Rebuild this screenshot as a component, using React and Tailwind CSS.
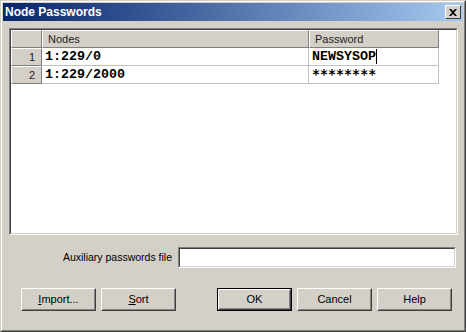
import React from 'react'

const sans = { fontFamily: '"Liberation Sans", Arial, sans-serif' }
const mono = { fontFamily: '"Liberation Mono", "Courier New", monospace' }
const starMono = { fontFamily: '"DejaVu Sans Mono", "Liberation Mono", monospace' }

function Button({ children, isDefault = false }) {
  const bevel = (
    <div className="h-full w-full border border-t-white border-l-white border-r-[#404040] border-b-[#404040]">
      <div className="h-full w-full border border-t-[#d4d0c8] border-l-[#d4d0c8] border-r-[#808080] border-b-[#808080] flex items-center justify-center text-[11px] text-black">
        {children}
      </div>
    </div>
  )
  return (
    <div className={`w-[75px] h-[23px] ${isDefault ? 'border border-black' : ''}`}>
      {bevel}
    </div>
  )
}

function HeaderCell({ children, className = '' }) {
  return (
    <div className={`h-[18px] bg-[#d4d0c8] border border-t-white border-l-white border-r-[#808080] border-b-[#808080] text-[11px] text-[#222] flex items-center ${className}`}>
      {children}
    </div>
  )
}

const rows = [
  { n: 1, node: '1:229/0', pass: 'NEWSYSOP', editing: true },
  { n: 2, node: '1:229/2000', pass: '********', masked: true },
]

export default function App() {
  return (
    <div className="w-[466px] h-[332px] border border-t-[#d4d0c8] border-l-[#d4d0c8] border-r-[#404040] border-b-[#404040] bg-[#d4d0c8]" style={sans}>
      <div className="h-full w-full border border-t-white border-l-white border-r-[#808080] border-b-[#808080] p-px flex flex-col">
        {/* Title bar */}
        <div className="h-[18px] bg-linear-to-r from-[#0a246a] to-[#a6caf0] flex items-center justify-between pl-[2px] pr-[2px]">
          <span className="text-white font-bold text-[12px]">Node Passwords</span>
          <div className="w-[16px] h-[14px] border border-t-white border-l-white border-r-[#404040] border-b-[#404040] bg-[#d4d0c8] flex items-center justify-center">
            <svg width="8" height="7" viewBox="0 0 8 7">
              <path d="M0 0h2l2 2 2-2h2L5 3.5 8 7H6L4 5 2 7H0l3-3.5z" fill="#000" />
            </svg>
          </div>
        </div>

        {/* Grid */}
        <div className="ml-[6px] mt-[7px] w-[449px] h-[207px] border border-t-[#808080] border-l-[#808080] border-r-white border-b-white">
          <div className="w-full h-full border border-t-[#404040] border-l-[#404040] border-r-[#d4d0c8] border-b-[#d4d0c8] bg-white">
            <div className="flex">
              <HeaderCell className="w-[31px]" />
              <HeaderCell className="w-[267px] pl-[5px]">Nodes</HeaderCell>
              <HeaderCell className="w-[130px] pl-[5px]">Password</HeaderCell>
            </div>
            {rows.map(r => (
              <div key={r.n} className="flex">
                <HeaderCell className="w-[31px] justify-end pr-[6px]">{r.n}</HeaderCell>
                <div className="w-[267px] h-[18px] border-r border-b border-[#c0c0c0] flex items-center pl-[3px] font-bold text-[13.33px] text-black" style={mono}>
                  {r.node}
                </div>
                <div className="w-[130px] h-[18px] border-r border-b border-[#c0c0c0] flex items-center pl-[3px] font-bold text-[13.33px] text-black" style={r.masked ? starMono : mono}>
                  {r.pass}
                  {r.editing && <span className="inline-block w-px h-[15px] bg-black" />}
                </div>
              </div>
            ))}
          </div>
        </div>

        {/* Auxiliary file */}
        <div className="flex items-center mt-[12px]">
          <span className="w-[169px] text-right text-[10.5px] text-black">Auxiliary passwords file</span>
          <div className="ml-[6px] w-[278px] h-[21px] border border-t-[#808080] border-l-[#808080] border-r-white border-b-white">
            <div className="w-full h-full border border-t-[#404040] border-l-[#404040] border-r-[#d4d0c8] border-b-[#d4d0c8] bg-white" />
          </div>
        </div>

        {/* Buttons */}
        <div className="flex mt-[20px] ml-[18px]">
          <Button><span><u>I</u>mport...</span></Button>
          <div className="ml-[5px]"><Button><span><u>S</u>ort</span></Button></div>
          <div className="ml-[41px]"><Button isDefault>OK</Button></div>
          <div className="ml-[5px]"><Button>Cancel</Button></div>
          <div className="ml-[5px]"><Button>Help</Button></div>
        </div>
      </div>
    </div>
  )
}
